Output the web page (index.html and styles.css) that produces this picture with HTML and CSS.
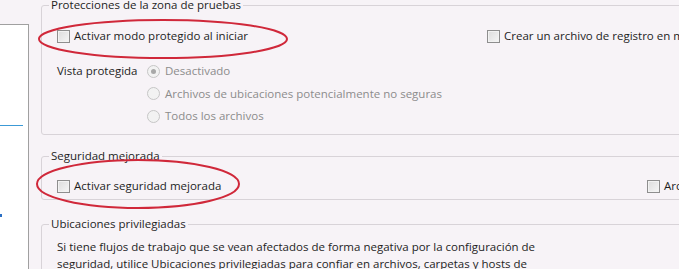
FILE: index.html
```html
<!DOCTYPE html>
<html>
<head>
    <title>Centro de confianza - Seguridad mejorada</title>
    <link rel="stylesheet" href="styles.css">
</head>
<body>

    <div class="page">
        <div class="sidebar">
            <div class="side-line"></div>
            <div class="side-dot"></div>
        </div>

        <div class="content">

            <fieldset class="group group-sandbox">
                <legend>Protecciones de la zona de pruebas</legend>
                <div class="check-row">
                    <label class="check check-main"><span class="box"></span>Activar modo protegido al iniciar</label>
                    <label class="check"><span class="box"></span>Crear un archivo de registro en modo protegido</label>
                </div>
                <div class="view-row">
                    <span class="view-label">Vista protegida</span>
                    <div class="radios">
                        <label class="radio"><span class="dot selected"></span>Desactivado</label>
                        <label class="radio"><span class="dot"></span>Archivos de ubicaciones potencialmente no seguras</label>
                        <label class="radio"><span class="dot"></span>Todos los archivos</label>
                    </div>
                </div>
                <svg class="mark mark-one" width="252" height="42" viewBox="0 0 252 42">
                    <ellipse cx="126" cy="21" rx="124" ry="19" fill="none" stroke="#d0283a" stroke-width="2"/>
                </svg>
            </fieldset>

            <fieldset class="group group-security">
                <legend>Seguridad mejorada</legend>
                <div class="check-row check-row-tight">
                    <label class="check check-wide"><span class="box"></span>Activar seguridad mejorada</label>
                    <label class="check"><span class="box"></span>Archivos de registro</label>
                </div>
                <svg class="mark mark-two" width="206" height="52" viewBox="0 0 206 52">
                    <ellipse cx="103" cy="26" rx="101" ry="24" fill="none" stroke="#d0283a" stroke-width="2"/>
                </svg>
            </fieldset>

            <fieldset class="group group-locations">
                <legend>Ubicaciones privilegiadas</legend>
                <p class="note">Si tiene flujos de trabajo que se vean afectados de forma negativa por la configuración de
                seguridad, utilice Ubicaciones privilegiadas para confiar en archivos, carpetas y hosts de
                forma selectiva.</p>
            </fieldset>

        </div>
    </div>

</body>
</html>
```

FILE: styles.css
```css
body {
    margin: 0;
    background-color: #f7f3f7;
    font-family: "Open Sans", sans-serif;
    font-size: 11.5px;
    color: #1e1e1e;
    overflow: hidden;
}

.page {
    display: flex;
    height: 269px;
    overflow: hidden;
}

.sidebar {
    position: relative;
    flex: 0 0 28px;
    margin-top: 24px;
    background: white;
    border-top: 1px solid #a0a0a0;
    border-right: 1px solid #a0a0a0;
}

.side-line {
    margin-top: 100px;
    width: 23px;
    height: 1px;
    background: #3c9ad6;
}

.side-dot {
    margin-top: 88px;
    width: 2px;
    height: 3px;
    background: #2a6fc4;
}

.content {
    flex: 0 0 700px;
    margin-left: 12px;
    margin-top: -3px;
}

.group {
    position: relative;
    margin: 0;
    padding: 0 0 0 15px;
    border: 1px solid #d8d3d8;
    border-radius: 3px;
    width: 680px;
}

.group legend {
    padding: 0 2px;
    margin-left: -8px;
    line-height: 16px;
}

.group-sandbox {
    height: 136px;
}

.group-security {
    margin-top: 13px;
    height: 50px;
}

.group-locations {
    margin-top: 16px;
}

.check-row {
    display: flex;
    margin-top: 15px;
    white-space: nowrap;
}

.check-row-tight {
    margin-top: 14px;
}

.check {
    display: flex;
    flex-shrink: 0;
    align-items: center;
    line-height: 16px;
}

.check-main {
    width: 430px;
}

.check-wide {
    width: 590px;
}

.box {
    width: 11px;
    height: 11px;
    margin-right: 4px;
    border: 1px solid #8e8e8e;
    background: linear-gradient(135deg, #dcdcdc, #f6f6f6);
    box-shadow: inset 0 0 0 1px #f2f2f2;
}

.view-row {
    display: flex;
    margin-top: 19px;
    white-space: nowrap;
}

.view-label {
    width: 90px;
    line-height: 16px;
}

.radios {
    display: flex;
    flex-direction: column;
    gap: 6.5px;
}

.radio {
    display: flex;
    align-items: center;
    line-height: 16px;
    color: #8c8c8c;
}

.dot {
    position: relative;
    width: 11px;
    height: 11px;
    margin-right: 5px;
    border: 1px solid #c6c6c6;
    border-radius: 50%;
    background: #f2f2f2;
}

.dot.selected::after {
    content: "";
    position: absolute;
    left: 3px;
    top: 3px;
    width: 5px;
    height: 5px;
    border-radius: 50%;
    background: #a8a8a8;
}

.note {
    width: 480px;
    margin: 6px 0 0 0;
    line-height: 17px;
}

.mark {
    position: absolute;
    pointer-events: none;
}

.mark-one {
    left: -5px;
    top: 5px;
}

.mark-two {
    left: -7px;
    top: -6px;
}
```
